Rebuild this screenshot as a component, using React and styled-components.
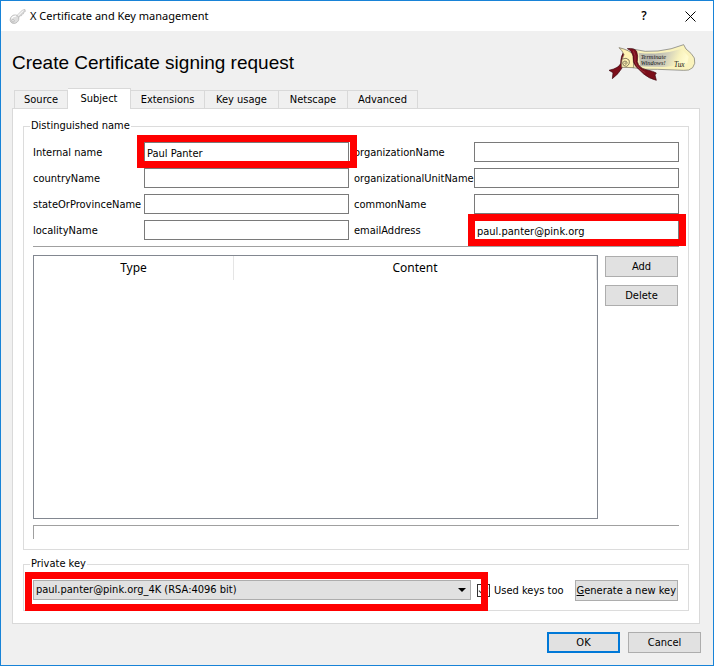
import React, {useState} from 'react'
import styled, {createGlobalStyle, css} from 'styled-components'

const GlobalStyle = createGlobalStyle`
* {
    box-sizing: border-box;
}
body {
    margin: 0;
    font: 11px/14px "DejaVu Sans Condensed", "DejaVu Sans", sans-serif;
    color: #000;
}
button, input, select {
    font: inherit;
    color: inherit;
}
`;

// Window frame
const Window = styled.div`
display: flex;
flex-direction: column;
min-height: 100vh;
background: #f0f0f0;
border: 1px solid #1883d7;
`;
const TitleBar = styled.header`
display: flex;
align-items: center;
height: 30px;
padding-left: 8px;
background: #fff;
`;
const Title = styled.div`
flex: 1;
margin-left: 4px;
font: 11px/16px "Noto Sans", sans-serif;
`;
const TitleButton = styled.button`
display: flex;
align-items: center;
justify-content: center;
width: 46px;
height: 30px;
padding: 0;
border: 0;
background: none;
font: 600 12px/16px "Open Sans", sans-serif;
`;

// Everything below the title bar
const Content = styled.main`
display: flex;
flex-direction: column;
flex: 1;
padding: 6px 13px 12px 11px;
`;
const Heading = styled.div`
display: flex;
align-items: center;
justify-content: space-between;
height: 51px;
padding-right: 4px;
h1 {
    margin: 0;
    font: 19px/24px "Liberation Sans", sans-serif;
}
`;

// Tabs
const TabList = styled.div`
display: flex;
align-items: flex-end;
height: 20px;
padding-left: 2px;
`;
const Tab = styled.button`
min-width: ${(p) => p.$width}px;
height: 18px;
padding: 1px 2px 0;
border: 1px solid #d9d9d9;
border-width: 1px 1px 0 0;
background: #f0f0f0;
&:first-child {
    border-left-width: 1px;
}
${(p) => p.$active && css`
    position: relative;
    height: 21px;
    margin-bottom: -1px;
    padding-bottom: 1px;
    background: #fff;
`}
`;
const Panel = styled.section`
display: flex;
flex-direction: column;
flex: 1;
gap: 7px;
padding: 10px 10px 12px;
background: #fff;
border: 1px solid #d9d9d9;
`;

// Group boxes
const Group = styled.fieldset`
flex: ${(p) => (p.$grow ? 1 : 'none')};
min-width: 0;
margin: 0;
padding: 0;
border: 1px solid #dcdcdc;
legend {
    margin-left: 6px;
    padding: 0 1px;
}
`;
const GroupBody = styled.div`
display: flex;
flex-direction: column;
padding: 9px;
`;

// Name fields
const Fields = styled.div`
display: grid;
grid-template-columns: 111px 1fr 125px 1fr;
row-gap: 6px;
align-items: center;
`;
const FieldLabel = styled.label`
white-space: nowrap;
padding-top: 2px;
padding-left: ${(p) => (p.$second ? 5 : 0)}px;
`;
const TextInput = styled.input`
display: block;
width: 100%;
height: 20px;
padding: 2px 2px 0;
border: 1px solid #7a7a7a;
border-radius: 0;
background: #fff;
outline: none;
`;

// Red frame drawn over the control it wraps
const Marked = styled.div`
position: relative;
min-width: 0;
&::after {
    content: '';
    position: absolute;
    inset: ${(p) => p.$inset};
    z-index: 1;
    border: 7px solid #f00;
    pointer-events: none;
}
`;

const Divider = styled.hr`
width: 100%;
height: 1px;
margin: 6px 0 8px;
border: 0;
background: #a0a0a0;
`;

// Entries table and its buttons
const Entries = styled.div`
display: flex;
gap: 7px;
padding-right: 1px;
`;
const TableFrame = styled.div`
flex: 1;
min-height: 264px;
border: 1px solid #828790;
`;
const Table = styled.table`
width: 100%;
table-layout: fixed;
border-spacing: 0;
th {
    height: 24px;
    padding: 0;
    border-right: 1px solid #e5e5e5;
    font: 12px/16px "Noto Sans", sans-serif;
}
th:first-child {
    width: 200px;
}
`;
const ButtonColumn = styled.div`
display: flex;
flex-direction: column;
gap: 8px;
padding-top: 1px;
`;
const Button = styled.button`
min-width: 73px;
height: 21px;
padding: 1px 1px 0;
border: ${(p) => (p.$primary ? '2px solid #0078d7' : '1px solid #adadad')};
background: #e1e1e1;
white-space: nowrap;
`;
const StatusFrame = styled.div`
height: 14px;
margin-top: 6px;
border: 1px solid #a0a0a0;
border-width: 1px 0 0 1px;
`;

// Private key row
const KeyRow = styled.div`
display: flex;
align-items: flex-start;
gap: 6px;
padding-right: 1px;
${Marked} {
    flex: 1;
}
`;
const Select = styled.select`
display: block;
width: 100%;
height: 20px;
padding: 0 24px 0 2px;
appearance: none;
border: 1px solid #adadad;
border-radius: 0;
background: #e1e1e1;
`;
const SelectArrow = styled.svg`
position: absolute;
top: 8px;
right: 5px;
pointer-events: none;
`;
const CheckLabel = styled.label`
display: flex;
align-items: center;
gap: 4px;
height: 21px;
margin-right: 5px;
white-space: nowrap;
`;
const Checkbox = styled.input`
display: flex;
justify-content: center;
width: 13px;
height: 13px;
margin: 0;
appearance: none;
border: 1px solid #333;
background: #fff;
&:checked::after {
    content: '';
    width: 4px;
    height: 8px;
    border: solid #333;
    border-width: 0 1px 1px 0;
    transform: rotate(45deg);
}
`;

const Footer = styled.footer`
display: flex;
justify-content: flex-end;
gap: 8px;
padding-top: 8px;
margin-right: -1px;
`;

const KeyIcon = () => (
    <svg width="17" height="17" viewBox="0 0 17 17" aria-hidden="true">
        <path d="M7 8.500L13.500 2l2.500-.5.3 2-1.600.8-.2 1.500-1.600.3-.3 1.600-1.700.2L9 10.500z" fill="#dcdcdc" stroke="#b9b9b9" strokeWidth=".7" />
        <path d="M8 8.500L14.500 2.300" stroke="#fff" />
        <ellipse cx="5.500" cy="11.200" rx="4.600" ry="4" transform="rotate(-40 5.500 11.200)" fill="#dedede" stroke="#b0b0b0" strokeWidth=".7" />
        <path d="M2.500 10.500Q4 7.800 7 8.200" fill="none" stroke="#fff" strokeWidth="1.200" />
        <circle cx="4" cy="12.800" r="1.200" fill="#fff" stroke="#999" strokeWidth=".6" />
    </svg>
)

// Parchment scroll with a dark red ribbon
const ScrollLogo = () => (
    <svg width="88" height="39" viewBox="54 129 264 117" role="img" aria-label="Certificate scroll">
        <defs>
            <linearGradient id="paper" x1="0" x2="1" y1="0" y2=".15">
                <stop offset="0" stopColor="#c9c7b4" />
                <stop offset=".3" stopColor="#b5b5ae" />
                <stop offset=".6" stopColor="#cfcdbb" />
                <stop offset=".85" stopColor="#f8f2bd" />
                <stop offset="1" stopColor="#fffbd0" />
            </linearGradient>
        </defs>
        <path d="M128 147Q165 158 204 153Q244 149 281 134L288 147Q306 160 313 174Q318 191 308 203Q298 213 281 211L203 208Q163 210 128 203z" fill="#faf3bd" stroke="#70706a" strokeWidth="2" />
        <path d="M146 158Q180 163 210 159Q245 156 275 146L296 170L292 190Q260 198 222 201L150 199z" fill="url(#paper)" />
        <path d="M104 151Q91 168 92 190Q88 204 57 211L69 218L67 236Q86 222 96 204Q104 180 104 151z" fill="#7c0e1a" stroke="#3c0810" strokeWidth="2" />
        <path d="M87 143Q96 150 102 164Q93 178 95 202L131 203Q129 184 132 166Q119 150 87 143z" fill="#fff3b4" stroke="#6c6452" strokeWidth="2" />
        <path d="M98 177Q109 171 117 180Q121 193 110 199Q99 200 98 189Q101 180 109 184Q115 191 108 193Q102 192 106 187" fill="none" stroke="#4c4436" strokeWidth="2" />
        <path d="M112 146Q132 143 140 154Q145 167 142 185Q147 204 168 209Q192 214 199 219L195 225L199 241Q176 235 161 222L137 199Q128 187 129 169Q125 151 112 146z" fill="#7c0e1a" stroke="#3c0810" strokeWidth="2" />
        <path d="M130 152Q138 166 135 185Q143 207 166 218" fill="none" stroke="#a3424a" strokeWidth="2" />
        <g fill="#111" fontFamily="'Liberation Serif', serif" fontStyle="italic" fontSize="19">
            <text x="152" y="177">Terminate</text>
            <text x="152" y="195">Windows!</text>
            <text x="252" y="202" fontSize="22">Tux</text>
        </g>
    </svg>
)

const tabs = [
    {name: 'Source', width: 54},
    {name: 'Subject', width: 63},
    {name: 'Extensions', width: 74},
    {name: 'Key usage', width: 74},
    {name: 'Netscape', width: 69},
    {name: 'Advanced', width: 70},
]

// Fields in reading order, two per row
// mark holds the inset of the red frame, when the field has one
const fields = [
    {id: 'internalName', label: 'Internal name', value: 'Paul Panter', mark: '-7px -8px -6px -7px'},
    {id: 'organizationName', label: 'organizationName'},
    {id: 'countryName', label: 'countryName'},
    {id: 'organizationalUnitName', label: 'organizationalUnitName'},
    {id: 'stateOrProvinceName', label: 'stateOrProvinceName'},
    {id: 'commonName', label: 'commonName'},
    {id: 'localityName', label: 'localityName'},
    {id: 'emailAddress', label: 'emailAddress', value: 'paul.panter@pink.org', mark: '-6px -7px -6px -6px'},
]

const Field = ({field, second}) => {
    const input = <TextInput id={field.id} type="text" defaultValue={field.value} />
    return (
        <>
            <FieldLabel htmlFor={field.id} $second={second}>{field.label}</FieldLabel>
            {field.mark ? <Marked $inset={field.mark}>{input}</Marked> : input}
        </>
    )
}

const App = () => {
    const [active, setActive] = useState('Subject');

    return (
        <Window>
            <GlobalStyle />
            <TitleBar>
                <KeyIcon />
                <Title>X Certificate and Key management</Title>
                <TitleButton aria-label="Help">?</TitleButton>
                <TitleButton aria-label="Close">
                    <svg width="11" height="11" viewBox="0 0 11 11">
                        <path d="M.5.5l10 10M10.500.5l-10 10" stroke="#000" />
                    </svg>
                </TitleButton>
            </TitleBar>
            <Content>
                <Heading>
                    <h1>Create Certificate signing request</h1>
                    <ScrollLogo />
                </Heading>
                <TabList role="tablist">
                    {tabs.map((tab) => (
                        <Tab
                            key={tab.name}
                            role="tab"
                            aria-selected={active === tab.name}
                            $width={tab.width}
                            $active={active === tab.name}
                            onClick={() => setActive(tab.name)}
                        >
                            {tab.name}
                        </Tab>
                    ))}
                </TabList>
                <Panel role="tabpanel">
                    <Group $grow>
                        <legend>Distinguished name</legend>
                        <GroupBody>
                            <Fields>
                                {fields.map((field, i) => (
                                    <Field key={field.id} field={field} second={i % 2 === 1} />
                                ))}
                            </Fields>
                            <Divider />
                            <Entries>
                                <TableFrame>
                                    <Table>
                                        <thead>
                                            <tr>
                                                <th>Type</th>
                                                <th>Content</th>
                                            </tr>
                                        </thead>
                                    </Table>
                                </TableFrame>
                                <ButtonColumn>
                                    <Button>Add</Button>
                                    <Button>Delete</Button>
                                </ButtonColumn>
                            </Entries>
                            <StatusFrame />
                        </GroupBody>
                    </Group>
                    <Group>
                        <legend>Private key</legend>
                        <GroupBody>
                            <KeyRow>
                                <Marked $inset="-8px -17px -11px -8px">
                                    <Select aria-label="Private key">
                                        <option>paul.panter@pink.org_4K (RSA:4096 bit)</option>
                                    </Select>
                                    <SelectArrow width="8" height="4" viewBox="0 0 8 4">
                                        <path d="M0 0h8L4 4z" />
                                    </SelectArrow>
                                </Marked>
                                <CheckLabel>
                                    <Checkbox type="checkbox" defaultChecked />
                                    Used keys too
                                </CheckLabel>
                                <Button><u>G</u>enerate a new key</Button>
                            </KeyRow>
                        </GroupBody>
                    </Group>
                </Panel>
                <Footer>
                    <Button $primary>OK</Button>
                    <Button>Cancel</Button>
                </Footer>
            </Content>
        </Window>
    )
};

export default App
